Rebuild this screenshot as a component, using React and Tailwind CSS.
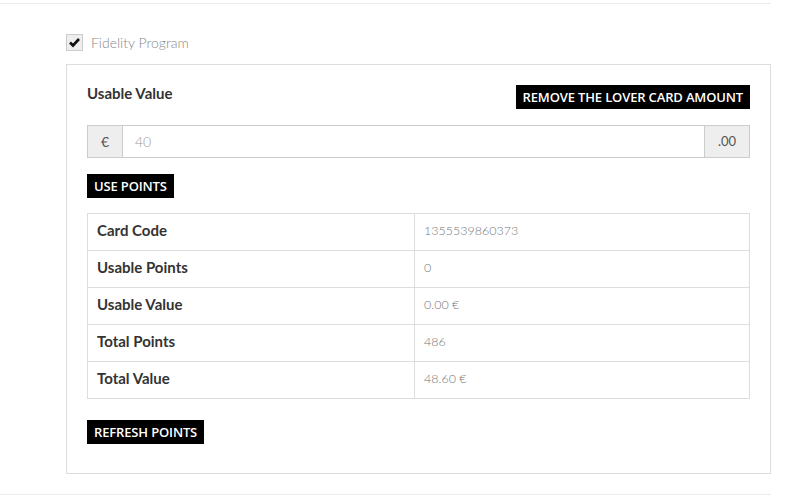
import React from "react";

const rows = [
  ["Card Code", "1355539860373"],
  ["Usable Points", "0"],
  ["Usable Value", "0.00 €"],
  ["Total Points", "486"],
  ["Total Value", "48.60 €"],
];

const btn =
  "h-[24px] px-[7px] bg-black text-white text-[13px] font-semibold tracking-[-0.15px] leading-[24px] whitespace-nowrap";
const btnFont = { fontFamily: '"Open Sans", sans-serif' };

export default function App() {
  return (
    <div className="w-[796px] h-[498px] bg-white" style={{ fontFamily: 'Lato, "Noto Sans", sans-serif' }}>
      <div className="w-[771px] pt-[3px]">
        <div className="border-t border-[#ececec] pl-[66px] pt-[30px]">
          <div className="flex items-center h-[17px]">
            <div className="w-[17px] h-[17px] bg-[#eee] border border-[#ccc] flex items-center justify-center">
              <svg width="13" height="13" viewBox="0 0 13 13">
                <polyline points="2,6.5 5,9.5 11,3" fill="none" stroke="#111" strokeWidth="2.6" />
              </svg>
            </div>
            <span className="ml-[8px] text-[14px] font-light text-[#888] leading-[17px]">Fidelity Program</span>
          </div>
          <div className="mt-[13px] border border-[#ddd] px-[20px] pt-[20px] pb-[29px]">
            <div className="flex justify-between items-start">
              <div className="text-[15px] font-bold text-[#333] leading-[16px]">Usable Value</div>
              <button className={btn} style={btnFont}>REMOVE THE LOVER CARD AMOUNT</button>
            </div>
            <div className="mt-[16px] flex h-[33px] border border-[#ccc]">
              <div className="w-[35px] bg-[#eee] border-r border-[#ccc] flex items-center justify-center text-[14px] text-[#555]">€</div>
              <div className="flex-1 flex items-center pl-[12px] text-[14px] font-light text-[#999]">40</div>
              <div className="w-[45px] bg-[#eee] border-l border-[#ccc] flex items-center justify-center text-[13px] text-[#555]">.00</div>
            </div>
            <button className={"mt-[16px] block " + btn} style={btnFont}>USE POINTS</button>
            <table className="mt-[15px] w-full border-collapse">
              <tbody>
                {rows.map(([k, v]) => (
                  <tr key={k} className="h-[37px]">
                    <td className="w-[327px] border border-[#ddd] pl-[9px] pb-[3px] text-[15px] font-bold text-[#333]">{k}</td>
                    <td className="border border-[#ddd] pl-[9px] pb-[2px] text-[12.5px] font-light text-[#777]">{v}</td>
                  </tr>
                ))}
              </tbody>
            </table>
            <button className={"mt-[21px] block " + btn} style={btnFont}>REFRESH POINTS</button>
          </div>
        </div>
        <div className="mt-[20px] border-t border-[#ececec]"></div>
      </div>
    </div>
  );
}
